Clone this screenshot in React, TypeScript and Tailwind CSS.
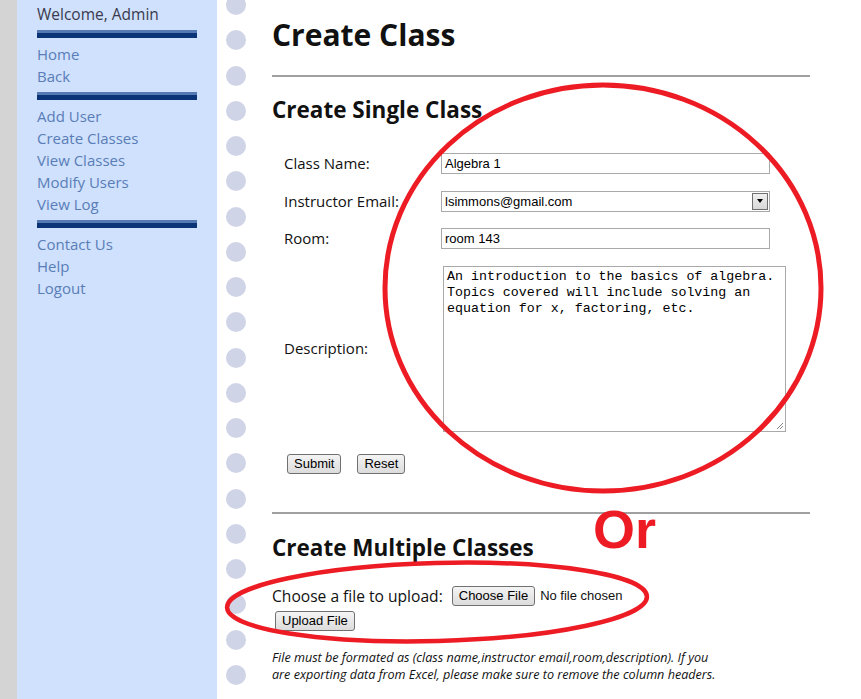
const navGroups = [
  ["Home", "Back"],
  ["Add User", "Create Classes", "View Classes", "Modify Users", "View Log"],
  ["Contact Us", "Help", "Logout"],
];

const Bar = () => <div className="my-[5px] h-[8px] w-[160px] border-t-[3px] border-[#5579b3] bg-[#0a3475]" />;

const Btn = ({ label, className = "" }: { label: string; className?: string }) => (
  <button
    type="button"
    className={
      "h-[20px] rounded-[3px] border border-[#707070] bg-gradient-to-b from-[#f4f4f4] to-[#dcdcdc] px-[6px] text-[13px] leading-[18px] text-black font-['Liberation_Sans',Arial,sans-serif] " +
      className
    }
  >
    {label}
  </button>
);

const Sidebar = () => (
  <div className="h-full w-[200px] shrink-0 bg-[#cfe1fc] pl-[20px] pt-[3px] font-['Open_Sans',sans-serif] text-[15px] leading-[22px]">
    <div className="text-[15.5px] text-[#3a3a4e]">Welcome, Admin</div>
    {navGroups.map((g, i) => (
      <div key={i}>
        <Bar />
        {g.map((item) => (
          <div key={item} className="text-[#5a7db8]">
            {item}
          </div>
        ))}
      </div>
    ))}
  </div>
);

const Dots = () => (
  <div className="flex h-full w-[55px] shrink-0 flex-col gap-[15.26px] overflow-hidden pl-[9px]">
    {Array.from({ length: 21 }).map((_, i) => (
      <div key={i} className={"h-[20px] w-[20px] shrink-0 rounded-full bg-[#d0d4e7] " + (i === 0 ? "-mt-[5px]" : "")} />
    ))}
  </div>
);

const label = "text-[15px] leading-[21px] text-[#111] pl-[12px]";
const input =
  "h-[21px] w-[329px] border border-[#a9a9a9] bg-white pl-[3px] text-[13px] leading-[19px] text-black font-['Liberation_Sans',Arial,sans-serif]";

export default function App() {
  return (
    <div className="relative flex h-[699px] w-full overflow-hidden bg-white">
      <div className="h-full w-[17px] shrink-0 bg-[#d4d4d4]" />
      <Sidebar />
      <Dots />
      <main className="w-[538px] font-['Open_Sans',sans-serif] text-[#111]">
        <h1 className="mt-[16px] text-[30px] font-bold leading-[38px]">Create Class</h1>
        <hr className="mt-[21px] border-t-2 border-[#a0a0a0]" />
        <h2 className="mt-[18px] text-[22.5px] font-bold leading-[30px]">Create Single Class</h2>

        <div className="mt-[28px] grid grid-cols-[169px_auto] items-center gap-y-[16.5px]">
          <div className={label}>Class Name:</div>
          <div className={input}>Algebra 1</div>
          <div className={label}>Instructor Email:</div>
          <div className={input + " relative flex items-center"}>
            lsimmons@gmail.com
            <div className="absolute right-[1px] top-[1px] flex h-[17px] w-[16px] items-center justify-center border border-[#6f6f6f] bg-gradient-to-b from-[#f0f0f0] to-[#d8d8d8]">
              <div className="h-0 w-0 border-x-[3.5px] border-t-[4px] border-x-transparent border-t-black" />
            </div>
          </div>
          <div className={label}>Room:</div>
          <div className={input}>room 143</div>
          <div className={label}>Description:</div>
          <div className="relative ml-[2px] h-[166px] w-[343px] border border-[#a9a9a9] bg-white px-[3px] pt-[2px] text-[13.3px] leading-[16px] text-black font-['Liberation_Mono','Courier_New',monospace]">
            An introduction to the basics of algebra.
            <br />
            Topics covered will include solving an
            <br />
            equation for x, factoring, etc.
            <svg className="absolute bottom-[1px] right-[1px]" width="8" height="8" viewBox="0 0 8 8">
              <path d="M7 1L1 7M7 4L4 7" stroke="#888" strokeWidth="1" />
            </svg>
          </div>
        </div>

        <div className="mt-[22px] flex gap-[16px] pl-[15px]">
          <Btn label="Submit" />
          <Btn label="Reset" />
        </div>

        <hr className="mt-[38px] border-t-2 border-[#a0a0a0]" />
        <h2 className="mt-[19px] text-[22.5px] font-bold leading-[30px]">Create Multiple Classes</h2>

        <div className="mt-[23px] flex items-center text-[15.6px] leading-[20px]">
          <span>Choose a file to upload:</span>
          <Btn label="Choose File" className="ml-[9px] h-[19px] leading-[17px]" />
          <span className="ml-[5px] text-[13px] font-['Liberation_Sans',Arial,sans-serif]">No file chosen</span>
        </div>
        <Btn label="Upload File" className="ml-[3px] mt-[5px]" />

        <p className="mt-[18px] text-[12.6px] italic leading-[17.5px]">
          File must be formated as (class name,instructor email,room,description). If you
          <br />
          are exporting data from Excel, please make sure to remove the column headers.
        </p>
      </main>

      <svg className="pointer-events-none absolute left-0 top-0" width="861" height="699">
        <ellipse cx="603" cy="288" rx="218" ry="203" fill="none" stroke="#ed1c24" strokeWidth="5" />
        <ellipse cx="437" cy="602" rx="210" ry="39" fill="none" stroke="#ed1c24" strokeWidth="4.5" transform="rotate(-1.5 437 602)" />
      </svg>
      <div className="pointer-events-none absolute left-[593px] top-[497px] text-[54px] font-bold leading-[64px] text-[#ed1c24] font-['Liberation_Sans',Arial,sans-serif]">
        Or
      </div>
    </div>
  );
}
